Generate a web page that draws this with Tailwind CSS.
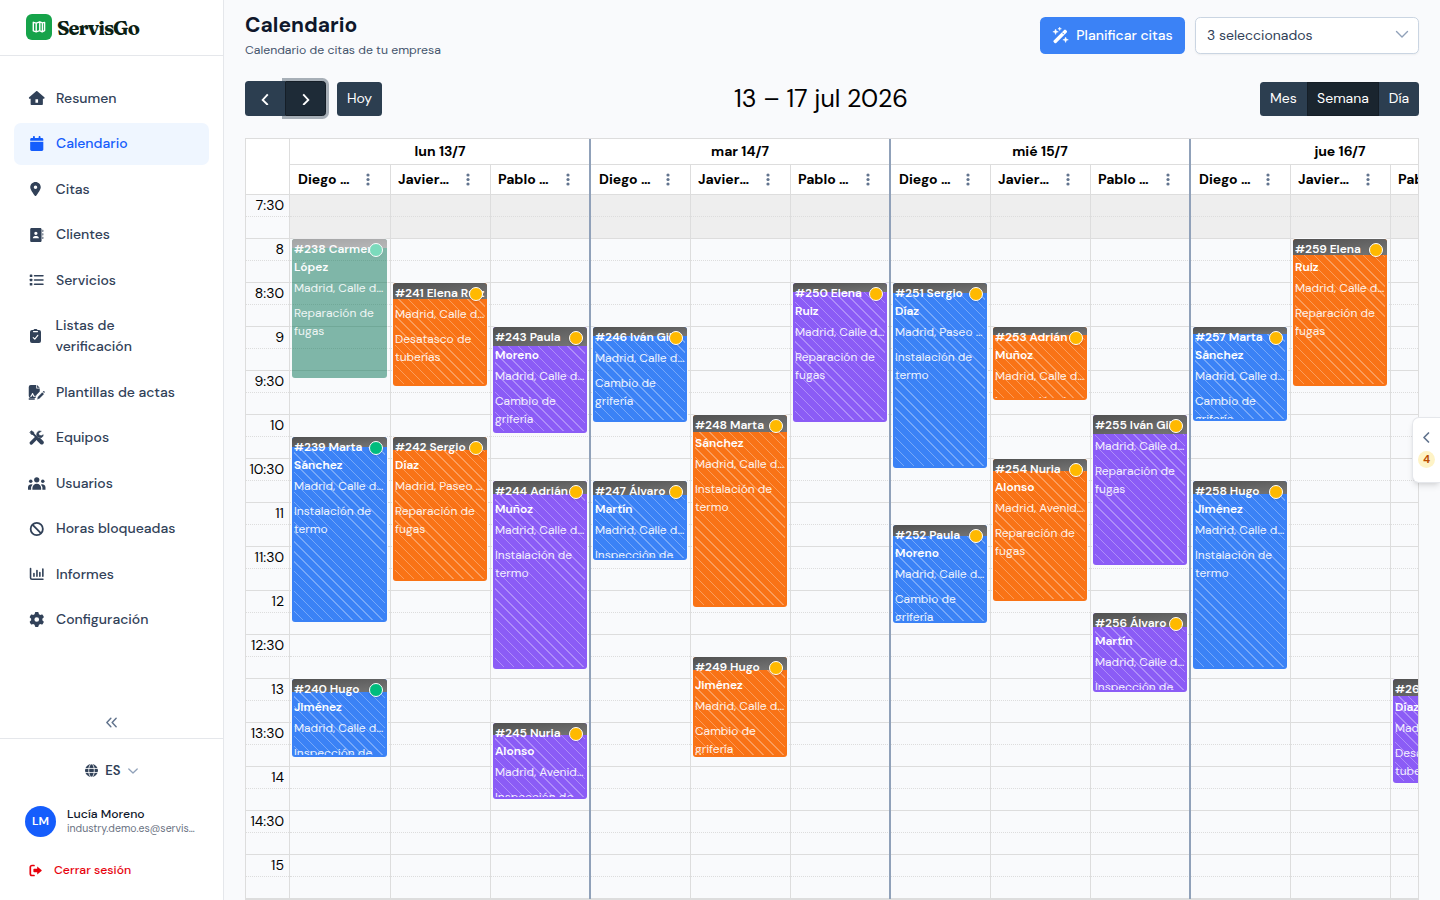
<!DOCTYPE html>
<html lang="es" class="text-[14px]">
<head>
    <meta charset="UTF-8">
    <meta name="viewport" content="width=device-width, initial-scale=1.0">
    <script src="https://cdn.jsdelivr.net/npm/@tailwindcss/browser@4"></script>
    <title>Calendario - ServisGo</title>
</head>
<body class="flex h-screen overflow-hidden bg-[#f9fafc] font-['DM_Sans',Inter,sans-serif] text-base leading-6 text-slate-700">
    <!-- Sidebar -->
    <aside class="flex w-64 shrink-0 flex-col border-r border-gray-200 bg-white">
        <div class="flex h-16 shrink-0 items-center gap-[5px] border-b border-gray-200 px-[26px] pb-px">
            <svg class="size-[26px]" viewBox="0 0 26 26" fill="none">
                <rect width="26" height="26" rx="6" fill="#16a34a"/>
                <path d="M7.3 8.3l2.9.9 3.6-1.4 2.6 1.1 2.2-.5v8.2l-2.4 1.2-2.6-1.2-3.4 1.2-2.9-1zM10.2 9.2v8.4M13.8 7.8v8.7M16.4 8.9v8.7" stroke="#fff" stroke-width="1.4" stroke-linejoin="round"/>
            </svg>
            <span class="font-['Fraunces','Liberation_Serif',serif] text-[20px] font-bold tracking-tighter text-[#0c1f14]">ServisGo</span>
        </div>

        <nav class="flex flex-1 flex-col gap-1 px-4 py-6 font-medium">
            <a href="#" class="flex items-center gap-3 rounded-lg px-4 py-3">
                <svg class="h-4 w-5 shrink-0" viewBox="0 0 576 512" fill="currentColor"><path d="M543.800 287.600h-32l.7 160.200V472c0 22.100-17.900 40-40 40H104c-22.100 0-40-17.900-40-40V287.600H32c-18 0-32-14-32-32.100c0-9 3-17 10-24L266.400 8c7-7 15-8 22-8s15 2 21 7L564.800 231.500c8 7 12 15 11 24c0 18-15 32.100-32 32.100zM240 304v128h96V304z" fill-rule="evenodd"/></svg>
                Resumen
            </a>
            <a href="#" aria-current="page" class="flex items-center gap-3 rounded-lg bg-blue-50 px-4 py-3 text-blue-600">
                <svg class="h-[15px] w-5 shrink-0" viewBox="0 0 448 512" fill="currentColor"><path d="M96 32V64H48C21.500 64 0 85.500 0 112v48H448V112c0-26.500-21.500-48-48-48H352V32c0-17.700-14.300-32-32-32s-32 14.300-32 32V64H160V32c0-17.700-14.300-32-32-32S96 14.300 96 32zM448 192H0V464c0 26.500 21.500 48 48 48H400c26.500 0 48-21.500 48-48V192z"/></svg>
                Calendario
            </a>
            <a href="#" class="flex items-center gap-3 rounded-lg px-4 py-3">
                <svg class="h-4 w-[15px] mr-[2px] shrink-0" viewBox="0 0 384 512" fill="currentColor"><path d="M215.700 499.200C267 435 384 279.400 384 192C384 86 298 0 192 0S0 86 0 192c0 87.400 117 243 168.300 307.200c12.300 15.300 35.100 15.300 47.400 0zM192 128a64 64 0 1 1 0 128 64 64 0 1 1 0-128z"/></svg>
                Citas
            </a>
            <a href="#" class="flex items-center gap-3 rounded-lg px-4 py-3">
                <svg class="h-4 w-5 shrink-0" viewBox="0 0 512 512" fill="currentColor"><path d="M64 0C38 0 16 22 16 48V464c0 26 22 48 48 48H384c26 0 48-22 48-48V48c0-26-22-48-48-48H64zM224 256a60 60 0 1 1 0-120 60 60 0 1 1 0 120zM112 376c0-48 36-84 84-84h56c48 0 84 36 84 84z"/><path d="M464 64h20q12 0 12 12v56q0 12-12 12h-20zM464 192h20q12 0 12 12v56q0 12-12 12h-20zM464 320h20q12 0 12 12v56q0 12-12 12h-20z"/></svg>
                Clientes
            </a>
            <a href="#" class="flex items-center gap-3 rounded-lg px-4 py-3">
                <svg class="h-4 w-5 shrink-0" viewBox="0 0 14 14" fill="currentColor"><rect y="1.500" width="2.600" height="2.600" rx=".6"/><rect y="5.700" width="2.600" height="2.600" rx=".6"/><rect y="9.900" width="2.600" height="2.600" rx=".6"/><rect x="4" y="2" width="10" height="1.600" rx=".8"/><rect x="4" y="6.200" width="10" height="1.600" rx=".8"/><rect x="4" y="10.400" width="10" height="1.600" rx=".8"/></svg>
                Servicios
            </a>
            <a href="#" class="flex items-center gap-3 rounded-lg px-4 py-3">
                <svg class="h-4 w-[15px] mr-[2px] shrink-0" viewBox="0 0 11 14"><path d="M2 1h1.500A1.500 1.500 0 0 1 5 0h1a1.500 1.500 0 0 1 1.500 1H9a2 2 0 0 1 2 2v9a2 2 0 0 1-2 2H2a2 2 0 0 1-2-2V3a2 2 0 0 1 2-2z" fill="currentColor"/><path d="M3.500 2.600h4M3.200 8.600l1.600 1.600 3-3.900" fill="none" stroke="#fff" stroke-width="1.100" stroke-linecap="round" stroke-linejoin="round"/></svg>
                <span>Listas de<br>verificación</span>
            </a>
            <a href="#" class="flex items-center gap-3 rounded-lg px-4 py-3">
                <svg class="h-[15px] w-5 shrink-0" viewBox="0 0 16 15"><path d="M2 0h5.500v3.500H11V6.500L7.600 10l-.8 3H2a2 2 0 0 1-2-2V2a2 2 0 0 1 2-2z" fill="currentColor"/><path d="M8.300 0L11 2.700H8.300z" fill="currentColor"/><path d="M0 14h6" stroke="currentColor" stroke-width="1.500"/><path d="M1.500 11.200h1l1.300-2.600 1.200 2.600h2" fill="none" stroke="#fff" stroke-width="1.100" stroke-linejoin="round"/><path d="M8.300 14.500l.6-2.600 4.600-4.700 1.900 1.900-4.700 4.600z" fill="currentColor" stroke="#fff" stroke-width=".3"/><path d="M14 6.700l.6-.5q.6-.4 1 .1l.3.400q.3.500-.1.900l-.4.500z" fill="currentColor"/></svg>
                Plantillas de actas
            </a>
            <a href="#" class="flex items-center gap-3 rounded-lg px-4 py-3">
                <svg class="h-[15px] w-5 shrink-0" viewBox="0 0 15 15" fill="none" stroke="currentColor" stroke-linecap="round"><path d="M2 13L7 8" stroke-width="3.200"/><path d="M11.700 1.200A3.300 3.300 0 1 0 14 4.800l-2 1-2-.5-.7-2z" fill="currentColor" stroke-width=".6"/><path d="M3.500 3.500L7.500 7.500" stroke-width="1.800"/><path d="M9.500 9.500l3 3" stroke-width="4"/><path d="M.8 2L2.200.700 4.500 2.200 4.600 4.600 2.300 4.400z" fill="currentColor" stroke-width=".6" stroke-linejoin="round"/></svg>
                Equipos
            </a>
            <a href="#" class="flex items-center gap-3 rounded-lg px-4 py-3">
                <svg class="h-[13px] w-5 shrink-0 overflow-visible" viewBox="0 0 18 13" fill="currentColor"><circle cx="9" cy="2.700" r="2.700"/><path d="M4.500 13v-1.700A4.500 4.500 0 0 1 9 6.800a4.500 4.500 0 0 1 4.500 4.500V13z"/><circle cx="2.800" cy="4.200" r="1.800"/><circle cx="15.200" cy="4.200" r="1.800"/><path d="M0 13v-2.600a3.200 3.200 0 0 1 4.700-2.800A6 6 0 0 0 3.200 13zM18 13v-2.600a3.200 3.200 0 0 0-4.700-2.800A6 6 0 0 1 14.800 13z"/></svg>
                Usuarios
            </a>
            <a href="#" class="flex items-center gap-3 rounded-lg px-4 py-3">
                <svg class="h-4 w-5 shrink-0" viewBox="0 0 14 14" fill="none" stroke="currentColor" stroke-width="1.800"><circle cx="7" cy="7" r="6.100"/><path d="M2.700 2.700l8.600 8.600"/></svg>
                Horas bloqueadas
            </a>
            <a href="#" class="flex items-center gap-3 rounded-lg px-4 py-3">
                <svg class="h-4 w-5 shrink-0" viewBox="0 0 14 14" fill="none" stroke="currentColor" stroke-width="1.600" stroke-linecap="round" stroke-linejoin="round"><path d="M.8 1.600v9.200q0 1.400 1.400 1.400h11M4.200 6.500v2.800M7.200 3.500v5.800M10.100 5.500v3.800M13.100 2v7.300"/></svg>
                Informes
            </a>
            <a href="#" class="flex items-center gap-3 rounded-lg px-4 py-3">
                <svg class="h-[15px] w-5 shrink-0" viewBox="0 0 512 512" fill="currentColor"><path d="M495.900 166.600c3.200 8.700 .5 18.400-6.400 24.600l-43.300 39.400c1.100 8.300 1.700 16.800 1.700 25.400s-.6 17.100-1.700 25.400l43.300 39.400c6.900 6.200 9.600 15.900 6.400 24.600c-4.400 11.900-9.700 23.300-15.800 34.300l-4.700 8.100c-6.600 11-14 21.400-22.100 31.200c-5.900 7.200-15.700 9.600-24.500 6.800l-55.700-17.700c-13.400 10.300-28.200 18.900-44 25.400l-12.500 57.100c-2 9.100-9 16.300-18.200 17.800c-13.800 2.300-28 3.500-42.500 3.500s-28.700-1.200-42.500-3.500c-9.200-1.500-16.200-8.700-18.200-17.800l-12.500-57.100c-15.800-6.500-30.600-15.100-44-25.400L83.100 425.900c-8.800 2.800-18.600 .3-24.500-6.800c-8.100-9.800-15.500-20.200-22.100-31.200l-4.700-8.100c-6.100-11-11.400-22.400-15.800-34.300c-3.200-8.700-.5-18.400 6.400-24.600l43.300-39.400C64.600 273.100 64 264.600 64 256s.6-17.100 1.700-25.400L22.400 191.200c-6.900-6.200-9.600-15.900-6.400-24.600c4.400-11.900 9.700-23.300 15.800-34.300l4.700-8.100c6.600-11 14-21.400 22.100-31.200c5.900-7.200 15.700-9.600 24.500-6.800l55.700 17.700c13.400-10.300 28.200-18.900 44-25.400l12.500-57.100c2-9.100 9-16.300 18.200-17.800C227.300 1.200 241.500 0 256 0s28.700 1.200 42.500 3.500c9.200 1.500 16.200 8.700 18.200 17.800l12.500 57.100c15.800 6.500 30.600 15.100 44 25.400l55.700-17.700c8.800-2.800 18.600-.3 24.500 6.800c8.100 9.800 15.500 20.200 22.100 31.200l4.700 8.100c6.100 11 11.400 22.400 15.800 34.300zM256 336a80 80 0 1 0 0-160 80 80 0 1 0 0 160z"/></svg>
                Configuración
            </a>
        </nav>

        <button type="button" aria-label="Contraer menú" class="flex h-9 shrink-0 items-center justify-center text-slate-500">
            <svg class="size-[13px]" viewBox="0 0 14 14" fill="none" stroke="currentColor" stroke-width="1.600" stroke-linecap="round" stroke-linejoin="round"><path d="M6.300 2.500L2 7l4.300 4.500M12 2.500L7.700 7l4.300 4.500"/></svg>
        </button>
        <div class="flex shrink-0 flex-col border-t border-gray-200 px-4 pt-4 pb-2">
            <button type="button" class="mb-3 flex h-10 items-center justify-center gap-2 text-[13px] font-semibold text-slate-700">
                <svg class="size-[13px]" viewBox="0 0 14 14"><circle cx="7" cy="7" r="7" fill="currentColor"/><g fill="none" stroke="#fff" stroke-width=".9"><ellipse cx="7" cy="7" rx="3" ry="7"/><path d="M0 4.800h14M0 9.200h14"/></g></svg>
                ES
                <svg class="size-[10px] text-slate-400" viewBox="0 0 10 10" fill="none" stroke="currentColor" stroke-width="1.300" stroke-linecap="round" stroke-linejoin="round"><path d="M.8 3L5 7l4.200-4"/></svg>
            </button>
            <div class="mb-1 flex h-13 items-center gap-[11px] px-[11px]">
                <span class="flex size-[31px] shrink-0 items-center justify-center rounded-full bg-blue-600 text-[12px] font-semibold text-white">LM</span>
                <div class="min-w-0">
                    <p class="truncate text-sm leading-[16px] font-medium text-slate-900">Lucía Moreno</p>
                    <p class="truncate text-xs leading-[14px] text-gray-500">industry.demo.es@servisgo.com</p>
                </div>
            </div>
            <button type="button" class="flex h-13 items-center gap-[12px] px-[15px] text-sm font-medium text-red-600">
                <svg class="size-[13px] shrink-0" viewBox="0 0 13 13"><path d="M5 1.500H3A1.700 1.700 0 0 0 1.300 3.200v6.600A1.700 1.700 0 0 0 3 11.500h2" fill="none" stroke="currentColor" stroke-width="1.700" stroke-linecap="round"/><path d="M8.200 2.400l4.300 3.600q.5.500 0 1L8.200 10.600V8.200H5.200q-.8 0-.8-.8V5.600q0-.8.8-.8h3z" fill="currentColor"/></svg>
                Cerrar sesión
            </button>
        </div>
    </aside>

    <main class="flex min-w-0 flex-1 flex-col px-6">
        <header class="flex shrink-0 items-center justify-between pt-[10px]">
            <div>
                <h1 class="text-[21px] leading-[30px] font-bold text-slate-900">Calendario</h1>
                <p class="text-sm leading-[20px] text-slate-600">Calendario de citas de tu empresa</p>
            </div>
            <div class="flex gap-[10px]">
                <button type="button" class="flex h-[37px] w-[145px] items-center justify-center gap-2 rounded-md bg-[#3b82f6] font-medium whitespace-nowrap text-white">
                    <svg class="size-[17px]" viewBox="0 0 17 17" fill="currentColor"><path d="M1.700 13.400L12.200 2.900q.8-.8 1.600 0l.9.900q.8.800 0 1.600L4.200 15.900q-.8.800-1.600 0l-.9-.9q-.8-.8 0-1.600z"/><path d="M10.300 5.600l1.700 1.700" stroke="#3b82f6" stroke-width="1"/><path d="M3.600 2l.8 2 2 .8-2 .8-.8 2-.8-2-2-.8 2-.8zM7.700 0l.5 1.300 1.300.5-1.300.5-.5 1.300-.5-1.300-1.300-.5 1.300-.5zM13.600 10l.8 2 2 .8-2 .8-.8 2-.8-2-2-.8 2-.8z" stroke="currentColor" stroke-width=".4"/></svg>
                    Planificar citas
                </button>
                <div class="relative w-64">
                    <select aria-label="Técnicos" class="h-[37px] w-full appearance-none rounded-md border border-slate-300 bg-white px-[11px] text-slate-700 shadow-xs">
                        <option>3 seleccionados</option>
                    </select>
                    <svg class="pointer-events-none absolute top-3 right-3 size-[14px] text-slate-400" viewBox="0 0 14 14" fill="none" stroke="currentColor" stroke-width="1.400" stroke-linecap="round" stroke-linejoin="round"><path d="M1.500 4.500L7 10l5.500-5.500"/></svg>
                </div>
            </div>
        </header>

        <!-- Calendar toolbar -->
        <div class="mt-[21px] mb-[22px] flex shrink-0 items-center justify-between">
            <div class="flex items-center">
                <button type="button" aria-label="Anterior" class="flex h-[35px] w-[40px] items-center justify-center rounded-l bg-[#2c3e50] text-white">
                    <svg class="h-[13px] w-[10px]" viewBox="0 0 10 14" fill="none" stroke="currentColor" stroke-width="2"><path d="M8 2.500L2.500 8.500 8 14"/></svg>
                </button>
                <button type="button" aria-label="Siguiente" class="flex h-[35px] w-[41px] items-center justify-center rounded-r border border-[#151e27] bg-[#1e2b37] text-white ring-3 ring-[#2c3e50]/40">
                    <svg class="h-[13px] w-[10px]" viewBox="0 0 10 14" fill="none" stroke="currentColor" stroke-width="2"><path d="M2 2.500L7.500 8.500 2 14"/></svg>
                </button>
                <button type="button" class="ml-[11px] h-[34px] w-[45px] rounded bg-[#2c3e50] text-white">Hoy</button>
            </div>
            <h2 class="text-[25px] leading-[35px] text-black">13 – 17 jul 2026</h2>
            <div class="flex text-white">
                <button type="button" class="h-[34px] w-[47px] rounded-l bg-[#2c3e50]">Mes</button>
                <button type="button" class="h-[34px] w-[72px] border border-[#151e27] bg-[#1a252f]">Semana</button>
                <button type="button" class="h-[34px] w-[40px] rounded-r bg-[#2c3e50]">Día</button>
            </div>
        </div>

        <!-- Calendar grid -->
        <div class="flex min-h-0 flex-1 overflow-hidden border border-[#ddd] text-black">
            <div class="w-[44px] shrink-0 border-r border-[#ddd]">
                <div class="h-[56px] border-b border-[#ddd] bg-white"></div>
                <div id="axis"></div>
            </div>
            <div id="days" class="flex min-w-0 flex-1 overflow-hidden"></div>
        </div>
    </main>

    <aside class="absolute top-[417px] right-0 flex h-[66px] w-[28px] flex-col items-center gap-2 rounded-l-lg border border-r-0 border-gray-200 bg-white pt-[13px] shadow-md">
        <button type="button" aria-label="Abrir citas pendientes">
            <svg class="size-[13px] text-slate-500" viewBox="0 0 13 13" fill="none" stroke="currentColor" stroke-width="1.700" stroke-linecap="round" stroke-linejoin="round"><path d="M8.500 2L4 6.500 8.500 11"/></svg>
        </button>
        <span class="flex size-[17px] items-center justify-center rounded-full bg-amber-100 text-[11px] font-bold text-amber-700">4</span>
    </aside>

    <script>
        const START = 450; // 7:30, in minutes
        const SLOTS = 32;
        const SLOT_HEIGHT = 22; // 15 minutes

        const blue = 'bg-[#3b82f6]';
        const orange = 'bg-[#f97316]';
        const purple = 'bg-[#8b5cf6]';

        // [id, client, start, height, travel height, address, service]
        const days = [
            { label: 'lun 13/7', people: [
                { name: 'Diego Navarro', color: blue, events: [
                    [238, 'Carmen\nLópez', '8:00', 139, 9, 'Madrid, Calle de Alcalá', 'Reparación de\nfugas', 'closed'],
                    [239, 'Marta\nSánchez', '10:15', 185, 10, 'Madrid, Calle de Alcalá', 'Instalación de\ntermo', 'done'],
                    [240, 'Hugo\nJiménez', '13:00', 78, 13, 'Madrid, Calle de Alcalá', 'Inspección de\ngas', 'done'],
                ] },
                { name: 'Javier Ortega', color: orange, events: [
                    [241, 'Elena Ruiz', '8:30', 103, 16, 'Madrid, Calle de Alcalá', 'Desatasco de\ntuberías'],
                    [242, 'Sergio\nDíaz', '10:15', 144, 13, 'Madrid, Paseo del Prado', 'Reparación de\nfugas'],
                ] },
                { name: 'Pablo Herrera', color: purple, events: [
                    [243, 'Paula\nMoreno', '9:00', 106, 19, 'Madrid, Calle de Alcalá', 'Cambio de\ngrifería'],
                    [244, 'Adrián\nMuñoz', '10:45', 188, 13, 'Madrid, Calle de Alcalá', 'Instalación de\ntermo'],
                    [245, 'Nuria\nAlonso', '13:30', 76, 12, 'Madrid, Avenida de América', 'Inspección de\ngas'],
                ] },
            ] },
            { label: 'mar 14/7', people: [
                { name: 'Diego Navarro', color: blue, events: [
                    [246, 'Iván Gil', '9:00', 95, 9, 'Madrid, Calle de Alcalá', 'Cambio de\ngrifería'],
                    [247, 'Álvaro\nMartín', '10:45', 79, 14, 'Madrid, Calle de Alcalá', 'Inspección de\ngas'],
                ] },
                { name: 'Javier Ortega', color: orange, events: [
                    [248, 'Marta\nSánchez', '10:00', 192, 17, 'Madrid, Calle de Alcalá', 'Instalación de\ntermo'],
                    [249, 'Hugo\nJiménez', '12:45', 100, 13, 'Madrid, Calle de Alcalá', 'Cambio de\ngrifería'],
                ] },
                { name: 'Pablo Herrera', color: purple, events: [
                    [250, 'Elena\nRuiz', '8:30', 139, 9, 'Madrid, Calle de Alcalá', 'Reparación de\nfugas'],
                ] },
            ] },
            { label: 'mié 15/7', people: [
                { name: 'Diego Navarro', color: blue, events: [
                    [251, 'Sergio\nDíaz', '8:30', 185, 10, 'Madrid, Paseo del Prado', 'Instalación de\ntermo'],
                    [252, 'Paula\nMoreno', '11:15', 98, 11, 'Madrid, Calle de Alcalá', 'Cambio de\ngrifería'],
                ] },
                { name: 'Javier Ortega', color: orange, events: [
                    [253, 'Adrián\nMuñoz', '9:00', 73, 8, 'Madrid, Calle de Alcalá', 'Inspección de\ngas'],
                    [254, 'Nuria\nAlonso', '10:30', 142, 12, 'Madrid, Avenida de América', 'Reparación de\nfugas'],
                ] },
                { name: 'Pablo Herrera', color: purple, events: [
                    [255, 'Iván Gil', '10:00', 150, 19, 'Madrid, Calle de Alcalá', 'Reparación de\nfugas'],
                    [256, 'Álvaro\nMartín', '12:15', 79, 14, 'Madrid, Calle de Alcalá', 'Inspección de\ngas'],
                ] },
            ] },
            { label: 'jue 16/7', people: [
                { name: 'Diego Navarro', color: blue, events: [
                    [257, 'Marta\nSánchez', '9:00', 94, 7, 'Madrid, Calle de Alcalá', 'Cambio de\ngrifería'],
                    [258, 'Hugo\nJiménez', '10:45', 188, 13, 'Madrid, Calle de Alcalá', 'Instalación de\ntermo'],
                ] },
                { name: 'Javier Ortega', color: orange, events: [
                    [259, 'Elena\nRuiz', '8:00', 147, 16, 'Madrid, Calle de Alcalá', 'Reparación de\nfugas'],
                ] },
                { name: 'Pablo Herrera', color: purple, events: [
                    [260, 'Sergio\nDíaz', '13:00', 104, 17, 'Madrid, Calle de Alcalá', 'Desatasco de\ntuberías'],
                ] },
            ] },
        ];

        function topOf(time) {
            const [h, m] = time.split(':').map(Number);
            return (h * 60 + m - START) / 15 * SLOT_HEIGHT;
        }

        function slotBorder(i) {
            return i % 2 ? 'border-solid' : 'border-dotted';
        }

        function renderEvent([id, client, start, height, travel, address, service, state], color) {
            const closed = state === 'closed';
            const dot = state ? 'bg-emerald-500' : 'bg-amber-400';
            return `
                <article class="absolute right-[3px] left-[2px] overflow-hidden rounded-[3px] text-[12px] leading-[18px] text-white shadow-[0_0_0_1px_#f9fafc] ${closed ? 'bg-[#077456] opacity-50' : color}" style="top:${topOf(start)}px;height:${height}px">
                    ${closed ? '' : '<div class="absolute inset-[2px] bg-[repeating-linear-gradient(45deg,transparent_0_6px,#ffffff4d_6px_7px)]"></div>'}
                    <div class="absolute inset-x-0 top-0 bg-linear-to-br from-[#505050] to-[#777]" style="height:${travel}px"></div>
                    <div class="absolute inset-[2px] -mt-px overflow-hidden">
                        <h3 class="font-semibold whitespace-pre">#${id} ${client}</h3>
                        <p class="mt-[3px] truncate opacity-90">${address}</p>
                        <p class="mt-[7px] whitespace-pre opacity-90">${service}</p>
                    </div>
                    <span class="absolute top-[4px] right-[4px] size-[14px] rounded-full border border-white shadow-sm ${dot}"></span>
                </article>`;
        }

        let slots = '';
        let labels = '';
        for (let i = 0; i < SLOTS; i++) {
            const t = START + i * 15;
            const label = i % 2 ? '' : Math.floor(t / 60) + (t % 60 ? ':' + t % 60 : '');
            labels += `<div class="h-[22px] border-b border-[#ddd] pr-[5px] text-right leading-[21px] ${slotBorder(i)}">${label}</div>`;
            slots += `<div class="h-[22px] border-b border-[#ddd] ${slotBorder(i)} ${i < 2 ? 'bg-[#eee]' : ''}"></div>`;
        }
        document.getElementById('axis').innerHTML = labels;

        document.getElementById('days').innerHTML = days.map((day, d) => `
            <section class="relative w-[300px] shrink-0">
                ${d ? '<div class="absolute inset-y-0 -left-px z-10 w-[2px] bg-slate-400"></div>' : ''}
                <h3 class="h-[26px] border-b border-[#ddd] bg-white text-center leading-[25px] font-bold">${day.label}</h3>
                <div class="flex">
                    ${day.people.map((person, p) => `
                        <div class="relative w-[100px] border-[#ddd] ${p || d ? 'border-l' : ''}">
                            <div class="flex h-[30px] items-center justify-between border-b border-[#ddd] bg-white pr-[20px] ${p ? 'pl-[7px]' : 'pl-[8px]'}">
                                <span class="w-[54px] truncate font-bold">${person.name}</span>
                                <button type="button" aria-label="Opciones">
                                    <svg class="h-[13px] w-[4px] text-slate-500" viewBox="0 0 4 13" fill="currentColor"><circle cx="2" cy="2" r="1.600"/><circle cx="2" cy="6.500" r="1.600"/><circle cx="2" cy="11" r="1.600"/></svg>
                                </button>
                            </div>
                            <div class="relative">
                                ${slots}
                                ${person.events.map(e => renderEvent(e, person.color)).join('')}
                            </div>
                        </div>`).join('')}
                </div>
            </section>`).join('');
    </script>
</body>
</html>
